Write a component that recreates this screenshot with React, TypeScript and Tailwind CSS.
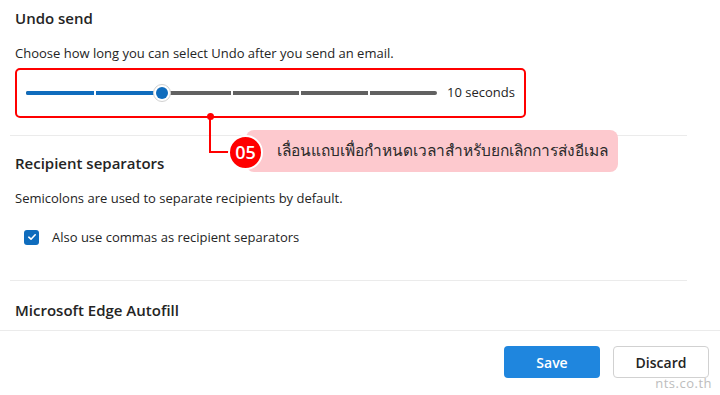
import React from 'react';

const font = { fontFamily: '"Open Sans", "Noto Sans", sans-serif' };

const Slider = () => {
  const ticks = [1, 2, 3, 4, 5];
  return (
    <div className="relative h-[16px] w-[411px]">
      <div className="absolute left-0 top-[6px] h-[4px] w-full rounded-full bg-[#616161]" />
      <div className="absolute left-0 top-[6px] h-[4px] w-[137px] rounded-l-full bg-[#0f6cbd]" />
      {ticks.map((t) => (
        <div
          key={t}
          className="absolute top-[6px] h-[4px] w-[2px] bg-white"
          style={{ left: t * 68.5 - 1 }}
        />
      ))}
      <div className="absolute left-[127px] top-[-1px] h-[18px] w-[18px] rounded-full border border-[#d1d1d1] bg-white p-[2px]">
        <div className="h-full w-full rounded-full bg-[#0f6cbd]" />
      </div>
    </div>
  );
};

const App = () => {
  return (
    <div className="relative h-[395px] w-[720px] overflow-hidden bg-white text-[#242424]" style={font}>
      <div className="flex h-[330px] flex-col pl-[15px] pr-[33px]">
        <div className="pt-[7px] text-[15px] font-semibold leading-[22px]">Undo send</div>
        <div className="mt-[15px] text-[13px] leading-[18px]">
          Choose how long you can select Undo after you send an email.
        </div>
        <div className="mt-[6px] flex h-[50px] w-[511px] items-center gap-[10px] rounded-[5px] border-2 border-[#ff0000] pl-[9px]">
          <Slider />
          <span className="text-[13px]">10 seconds</span>
        </div>
        <div className="ml-[-5px] mt-[17px] h-px bg-[#ebebeb]" />
        <div className="mt-[16px] text-[15px] font-semibold leading-[22px]">Recipient separators</div>
        <div className="mt-[15px] text-[13px] leading-[18px]">
          Semicolons are used to separate recipients by default.
        </div>
        <div className="mt-[21px] flex items-center gap-[13px] pl-[9px]">
          <div className="flex h-[15px] w-[15px] items-center justify-center rounded-[3px] bg-[#0f6cbd]">
            <svg width="10" height="10" viewBox="0 0 10 10" fill="none">
              <path d="M1.8 5.2 L4 7.2 L8.2 2.8" stroke="white" strokeWidth="1.6" strokeLinecap="round" strokeLinejoin="round" />
            </svg>
          </div>
          <span className="text-[13px] leading-[18px]">Also use commas as recipient separators</span>
        </div>
        <div className="ml-[-5px] mt-[34px] h-px bg-[#ebebeb]" />
        <div className="mt-[18px] text-[15px] font-semibold leading-[22px]">Microsoft Edge Autofill</div>
      </div>
      <div className="h-px bg-[#ebebeb]" />
      <div className="flex justify-end gap-[13px] pr-[11px] pt-[15px]">
        <button className="h-[32px] w-[96px] rounded-[4px] bg-[#1f86de] text-[14px] font-semibold text-white">
          Save
        </button>
        <button className="h-[32px] w-[96px] rounded-[4px] border border-[#d1d1d1] bg-white text-[14px] font-semibold text-[#242424]">
          Discard
        </button>
      </div>
      <div className="absolute bottom-[2px] right-[8px] text-[13px] tracking-[0.5px] text-[#bdbdbd]">nts.co.th</div>

      {/* callout */}
      <div className="absolute left-[207px] top-[113px] h-[7px] w-[7px] rounded-full bg-[#ff0000]" />
      <div className="absolute left-[209px] top-[116px] h-[37px] w-[2px] bg-[#ff0000]" />
      <div className="absolute left-[209px] top-[151px] h-[2px] w-[25px] bg-[#ff0000]" />
      <div className="absolute left-[246px] top-[130px] flex h-[42px] w-[372px] items-center rounded-[8px] bg-[#fdc9ce] pl-[31px] text-[15.5px] text-[#2b2b2b]">
        เลื่อนแถบเพื่อกำหนดเวลาสำหรับยกเลิกการส่งอีเมล
      </div>
      <div className="absolute left-[228px] top-[135px] flex h-[35px] w-[35px] items-center justify-center rounded-full border-2 border-white bg-[#ff0000] text-[18px] font-semibold text-white">
        05
      </div>
    </div>
  );
};

export default App;
